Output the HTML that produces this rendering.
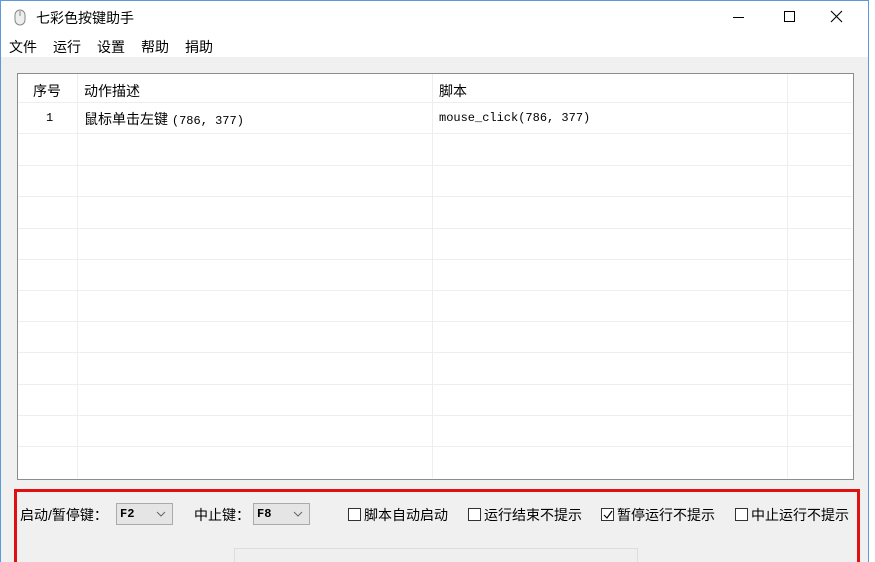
<!DOCTYPE html><html><head><meta charset="utf-8"><style>
*{margin:0;padding:0;box-sizing:border-box}
html,body{width:875px;height:562px;overflow:hidden}
body{background:#fff;font-family:"Liberation Sans","Noto Sans CJK SC",sans-serif;font-size:14px;color:#000;position:relative}
.a{position:absolute;white-space:nowrap}
.win{left:0;top:0;width:869px;height:562px;border:1px solid #5a9ad8;border-bottom:none;background:#f0f0f0}
.title{left:1px;top:1px;width:867px;height:56px;background:#fff}
.mono{font-family:"Liberation Mono","Noto Sans CJK SC",monospace;font-size:12px}
.cb{display:inline-block;width:13px;height:13px;border:1px solid #333;background:#fff;vertical-align:-1px;margin-right:3px;position:relative}
.sel{height:22px;border:1px solid #aaa;background:#e5e5e5;font-family:"Liberation Mono",monospace;font-weight:bold;font-size:12px;padding:3px 0 0 3px}
.sel svg{position:absolute;right:6px;top:7px}
</style></head><body>
<div class="a win"></div>
<div class="a title"></div>
<svg class="a" style="left:14px;top:9px" width="12" height="17"><rect x="1" y="1" width="10" height="15" rx="5" fill="#eee" stroke="#888"/><line x1="6" y1="2" x2="6" y2="7" stroke="#888"/></svg>
<div class="a" style="left:36px;top:8px">七彩色按键助手</div>
<div class="a" style="left:733px;top:17px;width:11px;border-top:1px solid #000"></div>
<div class="a" style="left:784px;top:11px;width:11px;height:11px;border:1px solid #000"></div>
<svg class="a" style="left:830px;top:10px" width="13" height="13"><path d="M1 1L12 12M12 1L1 12" stroke="#000" stroke-width="1.1"/></svg>
<div class="a" style="left:9px;top:37px">文件</div>
<div class="a" style="left:53px;top:37px">运行</div>
<div class="a" style="left:97px;top:37px">设置</div>
<div class="a" style="left:141px;top:37px">帮助</div>
<div class="a" style="left:185px;top:37px">捐助</div>
<div class="a" style="left:17px;top:73px;width:837px;height:407px;border:1px solid #8c8c8c;background:#fff"></div>
<div class="a" style="left:18px;top:102px;width:834px;border-top:1px solid #eee"></div>
<div id="rows"></div>
<div class="a" style="left:77px;top:74px;height:404px;border-left:1px solid #eee"></div>
<div class="a" style="left:432px;top:74px;height:404px;border-left:1px solid #eee"></div>
<div class="a" style="left:787px;top:74px;height:404px;border-left:1px solid #eee"></div>
<div class="a" style="left:33px;top:81px">序号</div>
<div class="a" style="left:84px;top:81px">动作描述</div>
<div class="a" style="left:439px;top:81px">脚本</div>
<div class="a mono" style="left:46px;top:111px">1</div>
<div class="a" style="left:84px;top:109px">鼠标单击左键 <span class="mono">(786, 377)</span></div>
<div class="a mono" style="left:439px;top:111px">mouse_click(786, 377)</div>
<div class="a" style="left:14px;top:489px;width:846px;height:80px;border:3px solid #e01010"></div>
<div class="a" style="left:20px;top:505px">启动/暂停键：</div>
<div class="a sel" style="left:116px;top:503px;width:57px">F2<svg width="10" height="6"><path d="M1 1L5 5L9 1" stroke="#666" fill="none"/></svg></div>
<div class="a" style="left:194px;top:505px">中止键：</div>
<div class="a sel" style="left:253px;top:503px;width:57px">F8<svg width="10" height="6"><path d="M1 1L5 5L9 1" stroke="#666" fill="none"/></svg></div>
<div class="a" style="left:348px;top:505px"><span class="cb"></span>脚本自动启动</div>
<div class="a" style="left:468px;top:505px"><span class="cb"></span>运行结束不提示</div>
<div class="a" style="left:601px;top:505px"><span class="cb"><svg style="position:absolute;left:1px;top:1px" width="10" height="10"><path d="M1 5L4 8L9 1" stroke="#000" fill="none" stroke-width="1.2"/></svg></span>暂停运行不提示</div>
<div class="a" style="left:735px;top:505px"><span class="cb"></span>中止运行不提示</div>
<div class="a" style="left:234px;top:548px;width:404px;height:20px;border:1px solid #ddd;background:#efefef"></div>
<script>
var h='';[133,165,196,228,259,290,321,352,384,415,446].forEach(function(y){h+='<div class="a" style="left:18px;top:'+y+'px;width:834px;border-top:1px solid #eee"></div>'});document.getElementById('rows').outerHTML=h;
</script>
</body></html>
